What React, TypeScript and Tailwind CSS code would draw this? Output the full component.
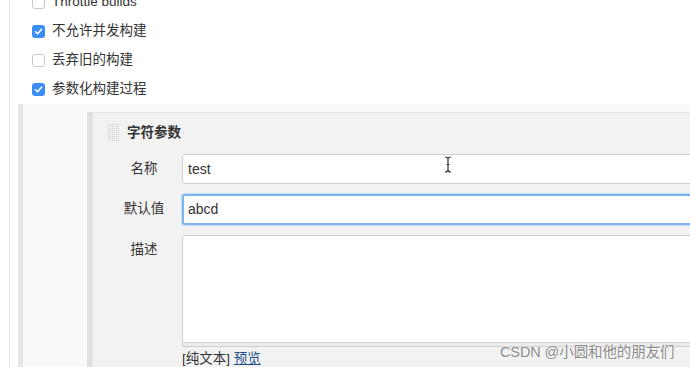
import React from "react"

const font = { fontFamily: '"Liberation Sans", "Noto Sans CJK SC", sans-serif' }

function Checkbox({ checked }: { checked: boolean }) {
  if (checked) {
    return (
      <span className="w-[13px] h-[13px] rounded-[3px] bg-[#3b8ef3] flex items-center justify-center shrink-0">
        <svg width="9" height="9" viewBox="0 0 8 8">
          <path d="M1.3 4.2 L3.2 6 L6.7 1.9" fill="none" stroke="#fff" strokeWidth="1.4" strokeLinecap="round" strokeLinejoin="round" />
        </svg>
      </span>
    )
  }
  return <span className="w-[13px] h-[13px] rounded-[3px] border border-[#c9c9c9] bg-white shrink-0" />
}

const options = [
  { label: "Throttle builds", checked: false },
  { label: "不允许并发构建", checked: true },
  { label: "丢弃旧的构建", checked: false },
  { label: "参数化构建过程", checked: true },
]

function DragHandle() {
  return (
    <svg width="12" height="18" viewBox="0 0 12 18" className="shrink-0">
      <defs>
        <pattern id="dots" width="2" height="2" patternUnits="userSpaceOnUse">
          <rect width="1" height="1" fill="#c9c9c9" />
        </pattern>
      </defs>
      <rect width="12" height="18" fill="url(#dots)" />
    </svg>
  )
}

export default function App() {
  return (
    <div className="relative w-[690px] h-[367px] overflow-hidden bg-white text-[#333]" style={font}>
      <div className="ml-[9px] h-full border-l border-[#e3e3e3] flex flex-col">
        <div className="-mt-[12px] pl-[22px] flex flex-col">
          {options.map((o) => (
            <div key={o.label} className="h-[29px] flex items-center gap-[7px] text-[13.5px]">
              <Checkbox checked={o.checked} />
              <span>{o.label}</span>
            </div>
          ))}
        </div>

        <div className="ml-[8px] flex-1 border-l-[5px] border-[#e5e5e5] bg-[#f9f9f9] pl-[64px] pt-[8px] flex flex-col">
          <div className="flex-1 border-l-[5px] border-[#e0e0e0] flex flex-col">
            <div className="flex-1 border-l border-t border-[#e6e6e6] bg-[#f2f2f2] flex flex-col">
              <div className="pl-[15px] pt-[11px] h-[41px] flex items-start gap-[7px]">
                <DragHandle />
                <span className="text-[13.5px] font-bold leading-[18px]">字符参数</span>
              </div>

              <div className="flex flex-col gap-[10px] pl-[25px]">
                <div className="flex items-center">
                  <span className="w-[52px] shrink-0 text-center text-[13.5px]">名称</span>
                  <div className="ml-[12px] w-[560px] shrink-0 h-[30px] bg-white border border-[#cfcfcf] rounded-[3px] flex items-center pl-[5px] text-[14px]">
                    test
                  </div>
                </div>
                <div className="flex items-center">
                  <span className="w-[52px] shrink-0 text-center text-[13.5px]">默认值</span>
                  <div className="ml-[12px] w-[560px] shrink-0 h-[31px] bg-white border-2 border-[#7fb4ec] rounded-[3px] shadow-[0_0_0_1px_#c3dcf7] flex items-center pl-[4px] text-[14px]">
                    abcd
                  </div>
                </div>
                <div className="flex items-start">
                  <span className="w-[52px] shrink-0 text-center text-[13.5px] pt-[5px]">描述</span>
                  <div className="ml-[12px] shrink-0 flex flex-col">
                    <div className="w-[560px] h-[108px] bg-white border border-[#d0d0d0] rounded-t-[2px]" />
                    <div className="w-[560px] h-[4px] border border-t-0 border-[#cfcfcf] bg-[#ececec]" />
                    <div className="mt-[4px] text-[13.5px] leading-[16px]">
                      [纯文本] <span className="text-[#1f4f8a] underline">预览</span>
                    </div>
                  </div>
                </div>
              </div>
            </div>
          </div>
        </div>
      </div>

      <svg className="absolute left-[443px] top-[156px]" width="10" height="17" viewBox="0 0 10 17">
        <path d="M2 1 Q5 1 5 3 Q5 1 8 1 M5 3 V14 M2 16 Q5 16 5 14 Q5 16 8 16 M3.5 8.5 H6.5" fill="none" stroke="#333" strokeWidth="1.2" />
      </svg>

      <div className="absolute left-[500px] top-[342px] text-[14.5px] text-[#8c8c8c] tracking-[-0.1px] [text-shadow:0_0_2px_#fff]">
        CSDN @小圆和他的朋友们
      </div>
    </div>
  )
}
